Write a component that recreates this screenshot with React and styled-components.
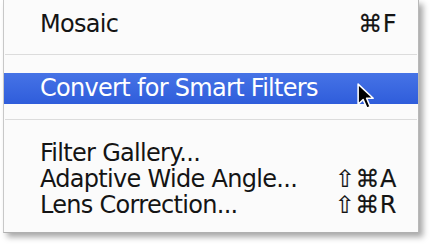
import React from 'react';
import styled, { createGlobalStyle } from 'styled-components';

const GlobalStyle = createGlobalStyle`
  html, body {
    margin: 0;
    padding: 0;
    background: #ffffff;
  }
`;

const Page = styled.div`
  width: 434px;
  height: 246px;
  overflow: hidden;
  background: #ffffff;
`;

const MenuPanel = styled.div`
  margin-left: 3px;
  width: 414px;
  padding: 11px 0 14px;
  background: #fbfbfb;
  border-left: 1px solid #c8c8c8;
  border-right: 1px solid #b8b8b8;
  border-bottom: 1px solid #b0b0b0;
  box-shadow: 4px 4px 6px rgba(0, 0, 0, 0.35);
  font-family: 'DejaVu Sans', 'Liberation Sans', sans-serif;
  font-size: 24px;
  letter-spacing: -0.7px;
  color: #141414;
`;

const Item = styled.div`
  position: relative;
  display: flex;
  align-items: center;
  justify-content: space-between;
  height: ${(p) => (p.$active ? 31 : 26)}px;
  line-height: ${(p) => (p.$active ? 31 : 26)}px;
  padding: 0 21px 0 36px;
  color: ${(p) => (p.$active ? '#ffffff' : '#141414')};
  background: ${(p) =>
    p.$active ? 'linear-gradient(#4673e6, #2f5ddb)' : 'transparent'};
`;

const Label = styled.span`
  white-space: nowrap;
`;

const Shortcut = styled.span`
  white-space: nowrap;
  letter-spacing: 0.5px;
  -webkit-text-stroke: 0.15px #141414;
`;

const Separator = styled.div`
  padding: ${(p) => p.$top}px 0 ${(p) => p.$bottom}px;

  &::after {
    content: '';
    display: block;
    height: 1px;
    margin: 0 1px;
    background: #dcdcdc;
  }
`;

const Cursor = styled.svg`
  position: absolute;
  left: 353px;
  top: 10px;
  width: 19px;
  height: 28px;
`;

const MousePointer = () => (
  <Cursor viewBox="0 0 17 25">
    <path
      d="M1 1 L1 19 L5.5 14.8 L8.8 22.5 L11.8 21.2 L8.6 13.6 L14.5 13.6 Z"
      fill="#000"
      stroke="#fff"
      strokeWidth="1.4"
      strokeLinejoin="round"
    />
  </Cursor>
);

const App = () => (
  <Page>
    <GlobalStyle />
    <MenuPanel>
      <Item>
        <Label>Mosaic</Label>
        <Shortcut>⌘F</Shortcut>
      </Item>
      <Separator $top={17} $bottom={18} />
      <Item $active>
        <Label>Convert for Smart Filters</Label>
        <MousePointer />
      </Item>
      <Separator $top={15} $bottom={20} />
      <Item>
        <Label>Filter Gallery...</Label>
      </Item>
      <Item>
        <Label>Adaptive Wide Angle...</Label>
        <Shortcut>⇧⌘A</Shortcut>
      </Item>
      <Item>
        <Label>Lens Correction...</Label>
        <Shortcut>⇧⌘R</Shortcut>
      </Item>
    </MenuPanel>
  </Page>
);

export default App;
